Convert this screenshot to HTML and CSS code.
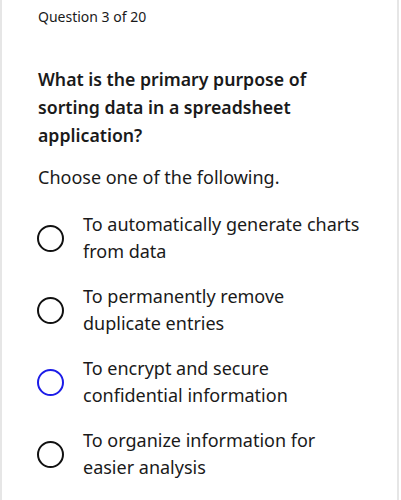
FILE: index.html
```html
<!DOCTYPE html>
<html lang="en">
<head>
    <meta charset="UTF-8">
    <meta name="viewport" content="width=device-width, initial-scale=1.0">
    <title>Quiz - Question 3</title>
    <link rel="stylesheet" href="styles.css">
</head>
<body>

    <div class="quiz-container">
        <div class="progress">Question 3 of 20</div>

        <h2 class="question">What is the primary purpose of sorting data in a spreadsheet application?</h2>

        <p class="instructions">Choose one of the following.</p>

        <ul class="options">
            <li class="option">
                <span class="radio"></span>
                <span class="option-text">To automatically generate charts from data</span>
            </li>
            <li class="option">
                <span class="radio"></span>
                <span class="option-text">To permanently remove duplicate entries</span>
            </li>
            <li class="option focused">
                <span class="radio"></span>
                <span class="option-text">To encrypt and secure confidential information</span>
            </li>
            <li class="option">
                <span class="radio"></span>
                <span class="option-text">To organize information for easier analysis</span>
            </li>
        </ul>
    </div>

</body>
</html>
```

FILE: styles.css
```css
body {
    background-color: #ffffff;
    color: #1a1a1a;
    font-family: "Noto Sans", "Open Sans", Arial, sans-serif;
    margin: 0;
    padding: 0;
}

.quiz-container {
    width: 399px;
    min-height: 500px;
    box-sizing: border-box;
    border-left: 2px solid #e6e6e6;
    border-right: 2px solid #e6e6e6;
    padding: 6px 35px 0 36px;
}

.progress {
    font-size: 14px;
    line-height: 22px;
}

.question {
    font-size: 17.7px;
    font-weight: 600;
    line-height: 28px;
    margin: 37px 0 0;
}

.instructions {
    font-size: 18px;
    line-height: 28px;
    margin: 14px 0 20px;
}

.options {
    list-style: none;
    padding: 0;
    margin: 0;
}

.option {
    display: flex;
    align-items: center;
    gap: 19px;
    margin-bottom: 18px;
}

.radio {
    flex: none;
    width: 23px;
    height: 23px;
    margin-left: -1px;
    border: 2px solid #111111;
    border-radius: 50%;
}

.option.focused .radio {
    border-color: #1c1ce8;
}

.option-text {
    font-size: 18px;
    line-height: 27px;
}
```
